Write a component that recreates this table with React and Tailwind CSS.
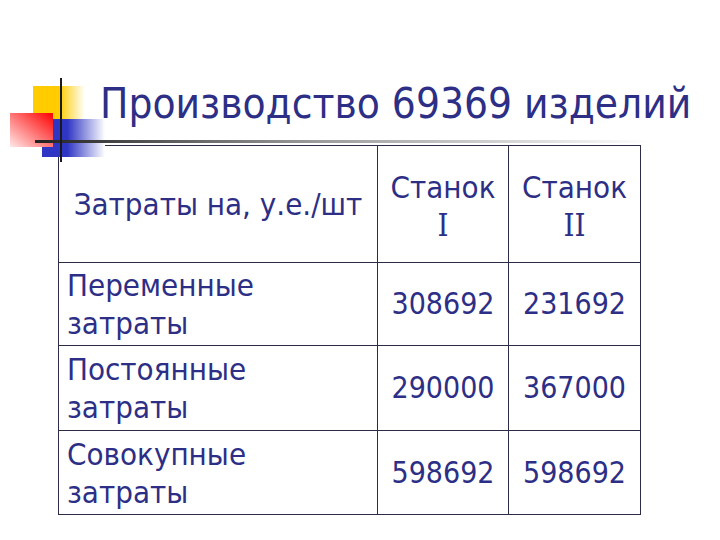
export default function App() {
  const rows = [
    ["Переменные", "затраты", "308692", "231692", "h-[83px]"],
    ["Постоянные", "затраты", "290000", "367000", "h-[85px]"],
    ["Совокупные", "затраты", "598692", "598692", "h-[84px]"],
  ];
  return (
    <div className="relative w-[720px] h-[540px] bg-white overflow-hidden font-['DejaVu_Sans_Condensed','DejaVu_Sans',sans-serif] text-[#2d2f86]">
      {/* logo decoration */}
      <div className="absolute left-[33px] top-[86px] w-[52px] h-[33px] bg-[linear-gradient(to_right,#ffcc00_50%,#ffffff)]" />
      <div className="absolute left-[42px] top-[119px] w-[63px] h-[38px] bg-[linear-gradient(to_right,#3036c4_40%,#ffffff)]" />
      <div className="absolute left-[10px] top-[113px] w-[43px] h-[34px] bg-[linear-gradient(to_bottom_left,#ff0000,#ffe8e8)]" />
      <div className="absolute left-[60px] top-[78px] w-[2px] h-[84px] bg-[#1a1a1a] z-20" />

      <div className="flex flex-col">
        <h1 className="pl-[100px] pt-[83px] text-[42px] leading-[42px] font-normal whitespace-nowrap">
          Производство 69369 изделий
        </h1>
        <div className="relative z-10 ml-[35px] mt-[15px] h-[3px] w-[615px] bg-[linear-gradient(to_right,#222222,#9a9a9a_45%,#ffffff)]" />
        <table className="ml-[58px] mt-[2px] w-[583px] border-collapse text-[31px] leading-[38px]">
          <tbody>
            <tr className="h-[117px]">
              <td className="w-[319px] border border-[#2c2c46] text-center align-middle">Затраты на, у.е./шт</td>
              <td className="w-[131px] border border-[#2c2c46] text-center align-middle pt-[4px]">
                Станок<br />
                <span className="font-['DejaVu_Serif_Condensed','DejaVu_Serif',serif]">I</span>
              </td>
              <td className="w-[132px] border border-[#2c2c46] text-center align-middle pt-[4px]">
                Станок<br />
                <span className="font-['DejaVu_Serif_Condensed','DejaVu_Serif',serif]">II</span>
              </td>
            </tr>
            {rows.map(([a, b, c, d, h]) => (
              <tr key={a} className={h}>
                <td className="border border-[#2c2c46] pl-[8px] text-left align-middle">
                  {a}<br />{b}
                </td>
                <td className="border border-[#2c2c46] text-center align-middle text-[30px]">{c}</td>
                <td className="border border-[#2c2c46] text-center align-middle text-[30px]">{d}</td>
              </tr>
            ))}
          </tbody>
        </table>
      </div>
    </div>
  );
}
